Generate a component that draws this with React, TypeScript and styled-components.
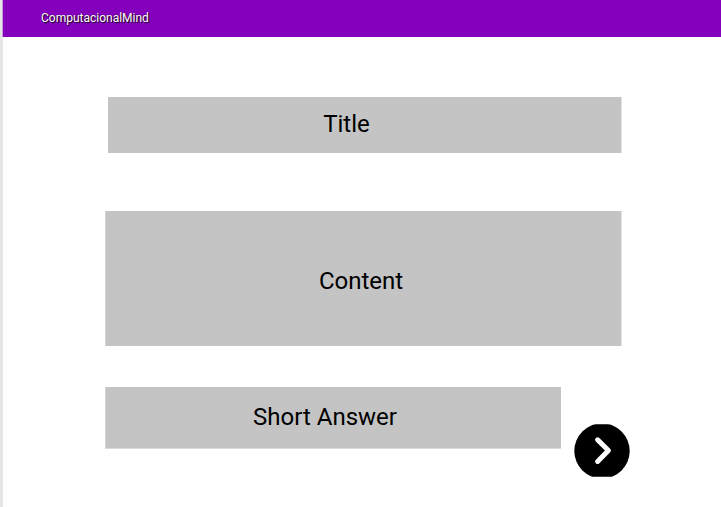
import React from "react";
import styled, { createGlobalStyle } from "styled-components";

const GlobalStyle = createGlobalStyle`
  * { box-sizing: border-box; }
  body { margin: 0; background: #fff; font-family: Roboto, sans-serif; overflow: hidden; }
`;

const Page = styled.div`
  width: 721px;
  height: 507px;
  background: #fff;
  border-left: 3px solid #e5e5e5;
  display: flex;
  flex-direction: column;
`;

const Header = styled.header`
  flex: none;
  height: 37px;
  margin-left: -1px;
  padding: 0 0 2px 38px;
  border-left: 1px solid #c59adb;
  background: #8400bd;
  display: flex;
  align-items: center;
`;

const Brand = styled.span`
  color: #fff;
  font-size: 12px;
  line-height: 14px;
  text-shadow: 1px 1px 1px rgba(0, 0, 0, 0.85), 0 0 1px rgba(0, 0, 0, 0.4);
`;

const Main = styled.main`
  padding: 60px 0 0 102px;
  display: flex;
  flex-direction: column;
`;

const Block = styled.section`
  flex: none;
  background: #c4c4c4;
  display: flex;
  justify-content: center;
`;

const TitleBlock = styled(Block)`
  width: 514px;
  height: 56px;
  margin: 0 0 58px 3px;
  padding: 13px 36px 0 0;
  border-right: 1px solid #e0e0e0;
`;

const ContentBlock = styled(Block)`
  width: 517px;
  height: 135px;
  margin-bottom: 41px;
  padding: 56px 5px 0 0;
  border-left: 1px solid #d6d6d6;
  border-right: 1px solid #e0e0e0;
`;

const AnswerBlock = styled(Block)`
  width: 456px;
  height: 62px;
  padding: 16px 17px 0 0;
  border-left: 1px solid #d6d6d6;
  border-bottom: 1px solid #dcdcdc;
`;

const Label = styled.span`
  color: #000;
  font-size: 24px;
  line-height: 28px;
`;

const AnswerRow = styled.div`
  display: flex;
  align-items: flex-start;
`;

const NextButton = styled.button`
  margin: 37px 0 0 13px;
  padding: 0;
  border: 0;
  background: none;
  width: 56px;
  height: 53px;
  line-height: 0;
`;

export default function App() {
  return (
    <>
      <GlobalStyle />
      <Page>
        <Header><Brand>ComputacionalMind</Brand></Header>
        <Main>
          <TitleBlock><Label>Title</Label></TitleBlock>
          <ContentBlock><Label>Content</Label></ContentBlock>
          <AnswerRow>
            <AnswerBlock><Label>Short Answer</Label></AnswerBlock>
            <NextButton aria-label="Next">
              <svg width="56" height="53" viewBox="0 0 56 53">
                <clipPath id="disc-bounds"><rect x="0" y="0.3" width="56" height="52.5" /></clipPath>
                <circle cx="28" cy="27" r="27.7" fill="#000" clipPath="url(#disc-bounds)" />
                <path d="M23.6 15.8 L34.4 26.6 L23.6 37.4" fill="none" stroke="#fff" strokeWidth="5" strokeLinecap="round" strokeLinejoin="round" />
              </svg>
            </NextButton>
          </AnswerRow>
        </Main>
      </Page>
    </>
  );
}
